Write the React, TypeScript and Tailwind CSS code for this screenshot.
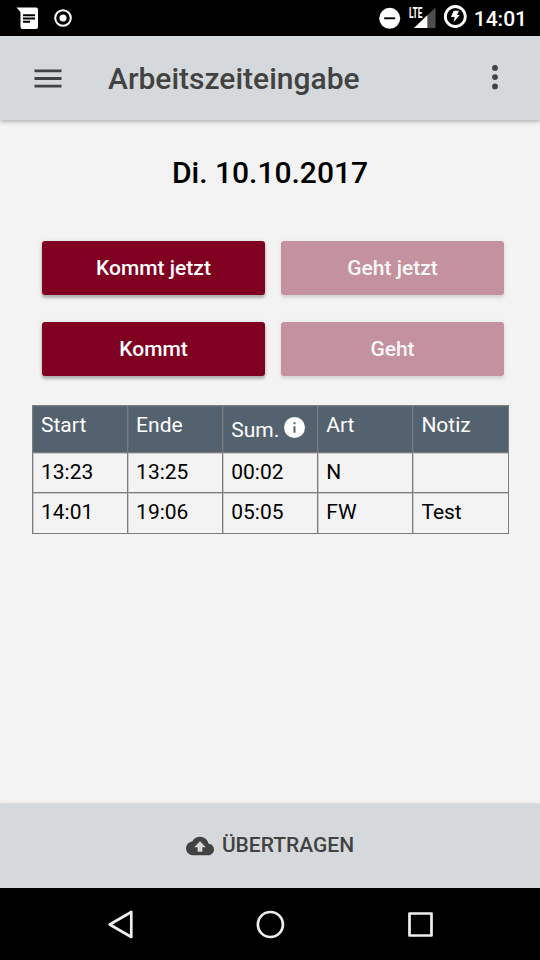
import type { ReactNode } from "react";

interface TimeEntry {
  start: string;
  end: string;
  sum: string;
  type: string;
  note: string;
}

const entries: TimeEntry[] = [
  { start: "13:23", end: "13:25", sum: "00:02", type: "N", note: "" },
  { start: "14:01", end: "19:06", sum: "05:05", type: "FW", note: "Test" },
];

function StatusBar() {
  return (
    <div className="flex h-9 shrink-0 items-center justify-between bg-black pl-4 pr-[13px] text-white">
      <div className="flex items-center gap-[15px]">
        <svg className="h-[23px] w-[23px]" viewBox="0 0 23 23">
          <path d="M.5 .5H20q2 0 2 2v17.500q0 2-2 2H6.500q-2 0-2-2V5z" fill="#fff" />
          <path d="M7 8.200h12M7 11.500h12M7 14.700h7" stroke="#000" strokeWidth="1.900" />
        </svg>
        <svg className="h-[18px] w-[18px]" viewBox="0 0 18 18">
          <circle cx="9" cy="9" r="7.800" fill="none" stroke="#fff" strokeWidth="2" />
          <circle cx="9" cy="9" r="3.500" fill="#fff" />
        </svg>
      </div>
      <div className="flex items-center">
        <svg className="h-[22px] w-[22px]" viewBox="0 0 22 22">
          <circle cx="10.700" cy="11.300" r="10.500" fill="#fff" />
          <path d="M5.200 11.300h11" stroke="#000" strokeWidth="1.900" />
        </svg>
        <div className="relative ml-2 h-[22px] w-[27px]">
          <svg className="h-[22px] w-[27px]" viewBox="0 0 27 22">
            <path d="M26.500 .5V21H5z" fill="#4d4d4d" />
            <path d="M18.300 8.300V21H5z" fill="#fff" />
          </svg>
          <span className="absolute -top-px left-0 h-[11px] origin-left scale-x-[.6] text-[14px] font-bold leading-[14px]">
            LTE
          </span>
        </div>
        <svg className="relative -top-[2px] ml-[7px] h-6 w-6" viewBox="0 0 24 24">
          <circle cx="12.300" cy="12.500" r="10" fill="none" stroke="#fff" strokeWidth="2.800" />
          <path d="M10.700 6.700h5.300l-2 4.300h2.800l-6.300 7.300 1.200-5.300H8z" fill="#fff" />
        </svg>
        <span className="ml-[7px] pt-[2px] text-[21px] font-medium leading-6">14:01</span>
      </div>
    </div>
  );
}

function Header() {
  return (
    <header className="z-10 flex h-[84px] shrink-0 items-center bg-[#d5d9dc] px-[34px] text-[#424242] shadow-[0_2px_4px_rgba(0,0,0,0.25)]">
      <svg className="h-5 w-7" viewBox="0 0 28 20" fill="currentColor">
        <path d="M.5 1.500h27v2.800H.5zM.5 9.100h27v2.800H.5zM.5 16.700h27v2.800H.5z" />
      </svg>
      <h1 className="ml-[46px] flex-1 pt-[2px] text-[30px] font-medium leading-9">Arbeitszeiteingabe</h1>
      <svg className="mr-[7px] h-[26px] w-2" viewBox="0 0 8 26" fill="currentColor">
        <circle cx="4" cy="2.900" r="2.900" />
        <circle cx="4" cy="12.100" r="2.900" />
        <circle cx="4" cy="21.400" r="2.900" />
      </svg>
    </header>
  );
}

function ActionButton({ children, disabled = false }: { children: ReactNode; disabled?: boolean }) {
  return (
    <button
      type="button"
      disabled={disabled}
      className="h-[54px] rounded-[3px] bg-[#800022] pt-[2px] text-[21px] font-medium text-white shadow-[0_3px_3px_rgba(0,0,0,0.22),0_1px_5px_rgba(0,0,0,0.14)] disabled:opacity-40"
    >
      {children}
    </button>
  );
}

function Cell({ children }: { children?: ReactNode }) {
  return (
    <td className="border border-[#7c7c7c] px-2 pb-px pt-0 align-middle shadow-[inset_1px_1px_0_#c9c9c9]">{children}</td>
  );
}

function HeadCell({ children }: { children: ReactNode }) {
  return (
    <th className="border border-[#7c7c7c] px-2 pb-0 pt-[6px] text-left align-top font-normal shadow-[inset_1px_1px_0_#5e6a75]">
      {children}
    </th>
  );
}

function EntryTable() {
  return (
    <table className="ml-8 mt-[29px] w-[476.500px] table-fixed border-collapse text-[21px] leading-[27px] text-black">
      <thead>
        <tr className="h-[47px] bg-[#54626f] text-white">
          <HeadCell>Start</HeadCell>
          <HeadCell>Ende</HeadCell>
          <HeadCell>
            <div className="flex whitespace-nowrap">
              <span className="mt-[5px]">Sum.</span>
              <svg className="ml-[5px] mt-[5px] h-[21px] w-[21px] shrink-0" viewBox="0 0 21 21">
                <circle cx="10.500" cy="10.500" r="10.500" fill="#fff" />
                <path d="M9.500 5.300h2v2h-2zM9.500 9.300h2v6.400h-2z" fill="#54626f" />
              </svg>
            </div>
          </HeadCell>
          <HeadCell>Art</HeadCell>
          <HeadCell>Notiz</HeadCell>
        </tr>
      </thead>
      <tbody>
        {entries.map((entry) => (
          <tr key={entry.start} className="h-10 last:h-[41px]">
            <Cell>{entry.start}</Cell>
            <Cell>{entry.end}</Cell>
            <Cell>{entry.sum}</Cell>
            <Cell>{entry.type}</Cell>
            <Cell>{entry.note}</Cell>
          </tr>
        ))}
      </tbody>
    </table>
  );
}

function NavigationBar() {
  return (
    <nav className="flex h-[72px] shrink-0 items-center justify-between bg-black px-[105px]">
      <svg className="h-[30px] w-[30px]" viewBox="0 0 30 30" fill="none" stroke="#eee" strokeWidth="2.700" strokeLinejoin="round">
        <path d="M26.300 3v25L4.700 15.500z" />
      </svg>
      <svg className="h-[30px] w-[30px]" viewBox="0 0 30 30" fill="none" stroke="#eee" strokeWidth="2.700">
        <circle cx="15.400" cy="15.500" r="12.500" />
      </svg>
      <svg className="h-[30px] w-[30px]" viewBox="0 0 30 30" fill="none" stroke="#eee" strokeWidth="2.700" strokeLinejoin="round">
        <path d="M4.500 4.500h22v22h-22z" />
      </svg>
    </nav>
  );
}

export default function App() {
  return (
    <div className="flex h-screen flex-col overflow-hidden bg-[#f3f3f3] font-[Roboto,sans-serif]">
      <StatusBar />
      <Header />
      <main className="flex flex-1 flex-col">
        <h2 className="mt-[35px] text-center text-[30px] font-medium leading-9 text-black">Di. 10.10.2017</h2>
        <div className="ml-[42px] mr-9 mt-[50px] grid grid-cols-[223px_223px] justify-between gap-y-[27px]">
          <ActionButton>Kommt jetzt</ActionButton>
          <ActionButton disabled>Geht jetzt</ActionButton>
          <ActionButton>Kommt</ActionButton>
          <ActionButton disabled>Geht</ActionButton>
        </div>
        <EntryTable />
      </main>
      <button
        type="button"
        className="flex h-[84px] shrink-0 items-center justify-center gap-2 bg-[#d5d9dc] text-[21px] font-medium text-[#424242] shadow-[0_-1px_2px_rgba(0,0,0,0.12)]"
      >
        <svg className="h-7 w-7" viewBox="0 0 24 24" fill="currentColor">
          <path d="M19.350 10.040C18.670 6.590 15.640 4 12 4 9.110 4 6.600 5.640 5.350 8.040 2.340 8.360 0 10.910 0 14c0 3.310 2.690 6 6 6h13c2.760 0 5-2.240 5-5 0-2.640-2.050-4.780-4.650-4.960zM14 13v4h-4v-4H7l5-5 5 5h-3z" />
        </svg>
        ÜBERTRAGEN
      </button>
      <NavigationBar />
    </div>
  );
}
